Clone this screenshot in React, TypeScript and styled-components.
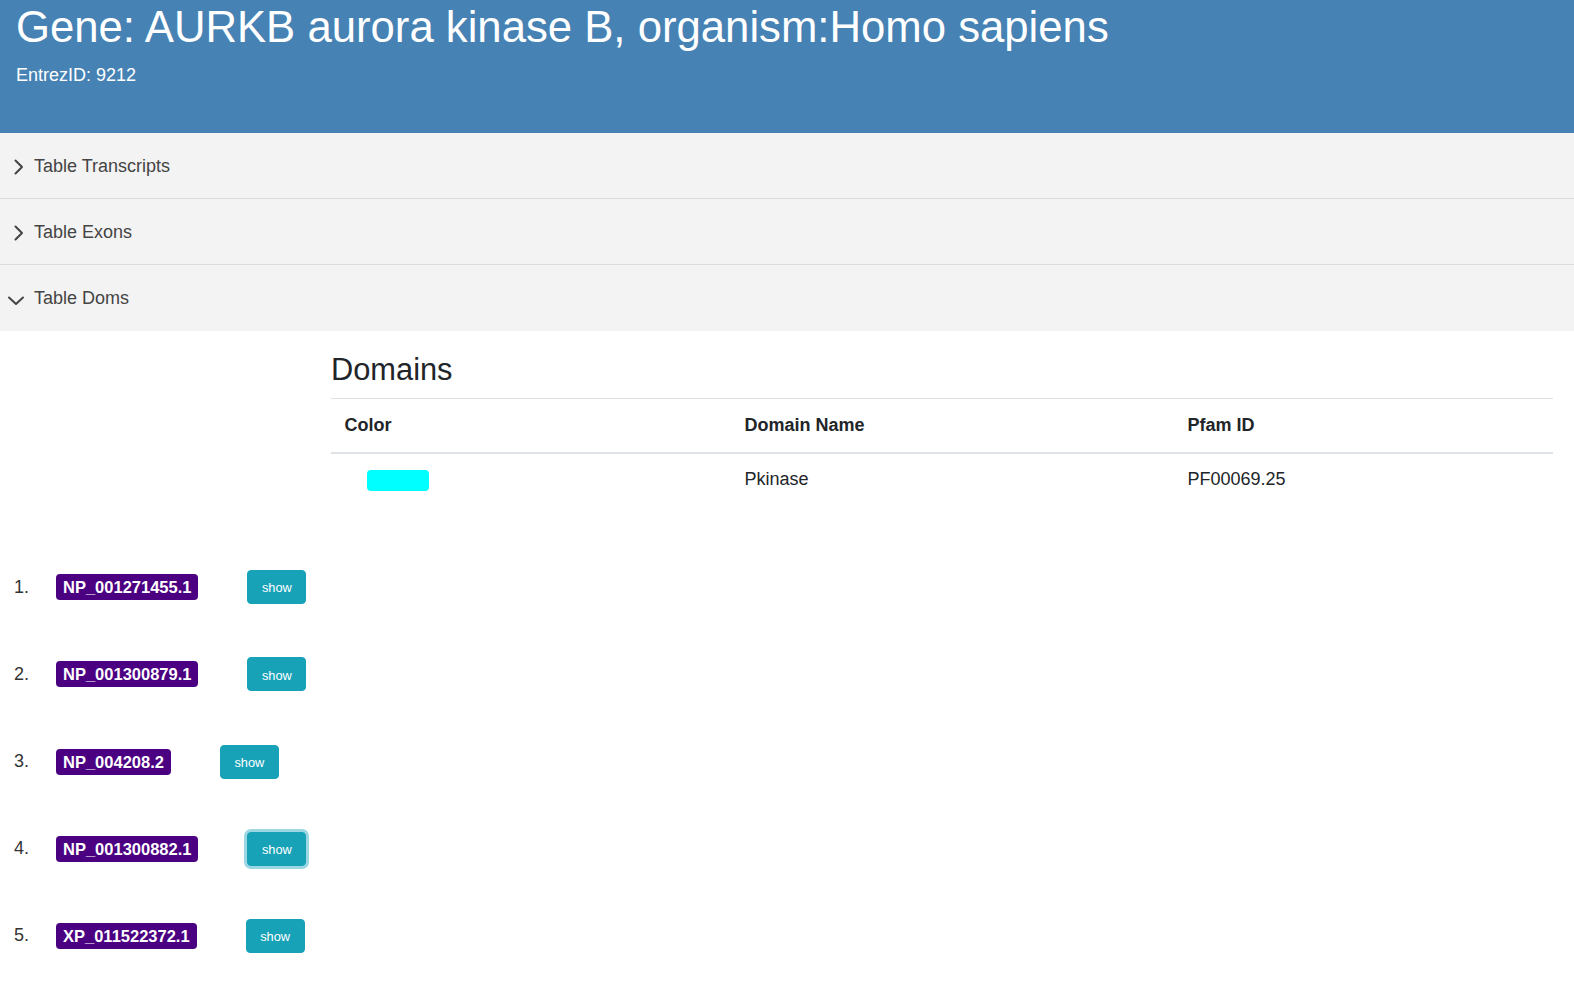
import React from 'react';
import styled, { createGlobalStyle, css } from 'styled-components';

const GlobalStyle = createGlobalStyle`
  html, body { margin: 0; padding: 0; background: #fff; }
  body {
    font-family: "Liberation Sans", Arial, sans-serif;
    color: #212529;
  }
  *, *::before, *::after { box-sizing: border-box; }
`;

const Header = styled.header`
  background: #4682b4;
  color: #fff;
  height: 133px;
  padding: 1px 16px 0;
`;

const Title = styled.h1`
  margin: 0 0 8.8px;
  font-size: 43.7px;
  font-weight: 400;
  line-height: 1.2;
`;

const SubTitle = styled.div`
  font-size: 18px;
  line-height: 26.4px;
`;

const Accordion = styled.section`
  display: flex;
  flex-direction: column;
`;

const AccordionRow = styled.div<{ $divider: boolean }>`
  display: flex;
  align-items: center;
  height: 66px;
  background: #f3f3f3;
  border-bottom: 1px solid ${(p) => (p.$divider ? '#dcdcdc' : '#f3f3f3')};
  font-size: 18px;
  color: #444;
  cursor: pointer;
`;

const IconSlot = styled.span`
  width: 34px;
  flex: none;
  display: flex;
  align-items: center;
`;

const Chevron = styled.svg<{ $open: boolean }>`
  width: 20px;
  height: 20px;
  ${(p) =>
    p.$open
      ? css`
          margin-left: 6px;
          margin-top: 6px;
        `
      : css`
          margin-left: 9px;
          margin-top: 3px;
        `}
`;

const RowLabel = styled.span`
  line-height: 1.15;
  padding-top: 2px;
`;

const Panel = styled.div`
  display: grid;
  grid-template-columns: 331px 1222px;
  padding-top: 21px;
`;

const DomainsBlock = styled.div`
  grid-column: 2;
`;

const SectionTitle = styled.h3`
  margin: 0 0 8.8px;
  font-size: 30.8px;
  font-weight: 400;
  line-height: 1.2;
  color: #212529;
`;

const Table = styled.table`
  width: 100%;
  border-collapse: collapse;
  font-size: 18px;
  line-height: 26.4px;
  color: #212529;
`;

const Th = styled.th<{ $w?: number }>`
  text-align: left;
  font-weight: 700;
  padding: 13.2px 13.5px;
  border-top: 1px solid #dee2e6;
  border-bottom: 2px solid #dee2e6;
  vertical-align: bottom;
  ${(p) => p.$w && css`width: ${p.$w}px;`}
`;

const Td = styled.td`
  padding: 12.5px 13.5px 13.2px;
  vertical-align: top;
`;

const Swatch = styled.span<{ $color: string }>`
  display: block;
  width: 62px;
  height: 21px;
  margin: 4px 0 0 22px;
  border-radius: 4px;
  background: ${(p) => p.$color};
`;

const List = styled.ol`
  list-style: none;
  margin: 38px 0 0;
  padding: 0 0 0 14px;
`;

const Item = styled.li`
  display: flex;
  align-items: center;
  height: 87.2px;
  font-size: 18px;
  color: #333;
`;

const Num = styled.span`
  width: 42px;
  flex: none;
`;

const Badge = styled.span`
  display: inline-block;
  height: 26px;
  line-height: 26px;
  padding: 0 7px;
  border-radius: 4px;
  background: #4b0082;
  color: #fff;
  font-weight: 700;
  font-size: 16.5px;
`;

const ShowButton = styled.button<{ $focused?: boolean }>`
  margin-left: 49px;
  height: 34px;
  padding: 3px 13.5px 0;
  border: 1px solid #17a2b8;
  border-radius: 4px;
  background: #17a2b8;
  color: #fff;
  font-family: "Liberation Sans", Arial, sans-serif;
  font-size: 12.8px;
  line-height: 1;
  cursor: pointer;
  ${(p) =>
    p.$focused &&
    css`
      box-shadow: 0 0 0 3px rgba(58, 176, 195, 0.5);
    `}
`;

const sections = [
  { label: 'Table Transcripts', open: false },
  { label: 'Table Exons', open: false },
  { label: 'Table Doms', open: true },
];

const proteins = [
  'NP_001271455.1',
  'NP_001300879.1',
  'NP_004208.2',
  'NP_001300882.1',
  'XP_011522372.1',
];

function ChevronIcon({ open }: { open: boolean }) {
  return (
    <Chevron $open={open} viewBox="0 0 20 20" fill="none" stroke="#444" strokeWidth={2} strokeLinecap="round" strokeLinejoin="round">
      {open ? <path d="M3 6.5 L10 13 L17 6.5" /> : <path d="M6.5 3.5 L13 10 L6.5 16.5" />}
    </Chevron>
  );
}

export default function App() {
  return (
    <>
      <GlobalStyle />
      <Header>
        <Title>Gene: AURKB aurora kinase B, organism:Homo sapiens</Title>
        <SubTitle>EntrezID: 9212</SubTitle>
      </Header>
      <Accordion>
        {sections.map((s, i) => (
          <AccordionRow key={s.label} $divider={i < sections.length - 1}>
            <IconSlot>
              <ChevronIcon open={s.open} />
            </IconSlot>
            <RowLabel>{s.label}</RowLabel>
          </AccordionRow>
        ))}
      </Accordion>
      <Panel>
        <DomainsBlock>
          <SectionTitle>Domains</SectionTitle>
          <Table>
            <thead>
              <tr>
                <Th $w={400}>Color</Th>
                <Th $w={443}>Domain Name</Th>
                <Th>Pfam ID</Th>
              </tr>
            </thead>
            <tbody>
              <tr>
                <Td>
                  <Swatch $color="#00ffff" />
                </Td>
                <Td>Pkinase</Td>
                <Td>PF00069.25</Td>
              </tr>
            </tbody>
          </Table>
        </DomainsBlock>
      </Panel>
      <List>
        {proteins.map((p, i) => (
          <Item key={p}>
            <Num>{i + 1}.</Num>
            <Badge>{p}</Badge>
            <ShowButton $focused={i === 3}>show</ShowButton>
          </Item>
        ))}
      </List>
    </>
  );
}
